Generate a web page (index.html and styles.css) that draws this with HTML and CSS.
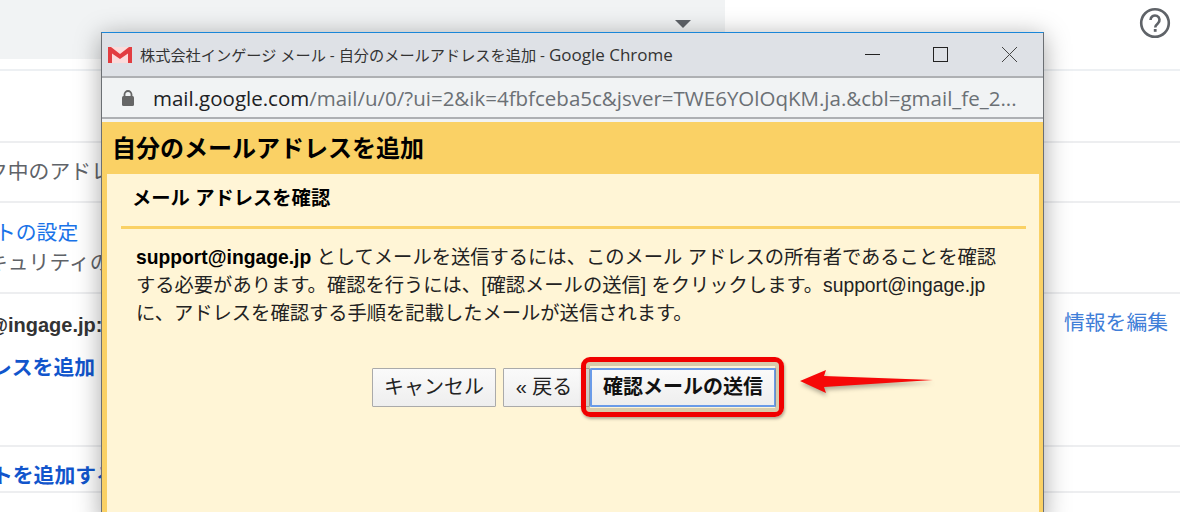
FILE: index.html
```html
<!DOCTYPE html>
<html lang="ja">
<head>
    <meta charset="UTF-8">
    <title>自分のメールアドレスを追加</title>
    <link rel="stylesheet" href="styles.css">
</head>
<body>
    <div class="settings">
        <div class="top-row">
            <div class="top-panel"><span class="caret"></span></div>
            <svg class="help" width="32" height="32" viewBox="0 0 32 32">
                <circle cx="16" cy="16" r="13.8" fill="none" stroke="#5f6368" stroke-width="2.6"/>
                <path d="M11.5 13a4.5 4.5 0 1 1 7.3 3.5c-1.6 1.3-2.6 2-2.6 4" fill="none" stroke="#5f6368" stroke-width="2.6"/>
                <rect x="14.8" y="22" width="2.8" height="2.8" fill="#5f6368"/>
            </svg>
        </div>
        <div class="row row-a"></div>
        <div class="row row-b"><span class="grey cut-b">ク中のアドレス</span></div>
        <div class="row row-c">
            <a class="link cut-c">トの設定</a>
            <span class="grey cut-d">キュリティの</span>
        </div>
        <div class="row row-d">
            <div class="row-d-left">
                <b class="mail cut-e">support@ingage.jp:</b>
                <a class="link strong cut-f">レスを追加</a>
            </div>
            <a class="link edit">情報を編集</a>
        </div>
        <div class="row row-e"><a class="link strong cut-g">トを追加する</a></div>
    </div>

    <div class="popup">
        <div class="titlebar">
            <svg class="gmail" width="24" height="16" viewBox="0 0 24 16">
                <rect width="24" height="16" fill="#fbdcdc"/>
                <path d="M0 0h3l9 7 9-7h3v16h-4V6.500l-8 5.500-8-5.500V16H0z" fill="#e23d41"/>
            </svg>
            <span class="window-title">株式会社インゲージ メール - 自分のメールアドレスを追加 - <span class="app-name">Google Chrome</span></span>
            <svg class="win-btns" width="160" height="20" viewBox="0 0 160 20">
                <path d="M0 9.500h15" stroke="#222" fill="none"/>
                <rect x="68.500" y="2.500" width="14" height="14" stroke="#222" fill="none"/>
                <path d="M137 2l15 15M152 2l-15 15" stroke="#444" fill="none"/>
            </svg>
        </div>
        <div class="urlbar">
            <svg class="lock" width="14" height="16" viewBox="0 0 14 16">
                <path d="M3.500 7V4.500a3.500 3.500 0 0 1 7 0V7" fill="none" stroke="#666" stroke-width="1.800"/>
                <rect x="1" y="6" width="12" height="10" rx="1.500" fill="#666"/>
            </svg>
            <span class="url"><span class="host">mail.google.com</span>/mail/u/0/?ui=2&amp;ik=4fbfceba5c&amp;jsver=TWE6YOlOqKM.ja.&amp;cbl=gmail_fe_2...</span>
        </div>
        <div class="dialog">
            <h1 class="dialog-title">自分のメールアドレスを追加</h1>
            <div class="dialog-body">
                <h2 class="section-title">メール アドレスを確認</h2>
                <p class="message"><b>support@ingage.jp</b> としてメールを送信するには、このメール アドレスの所有者であることを確認<br>する必要があります。確認を行うには、[確認メールの送信] をクリックします。support@ingage.jp<br>に、アドレスを確認する手順を記載したメールが送信されます。</p>
                <div class="buttons">
                    <button class="btn cancel">キャンセル</button>
                    <button class="btn back">« 戻る</button>
                    <button class="btn send">確認メールの送信</button>
                </div>
            </div>
        </div>
    </div>

    <div class="highlight"></div>
    <svg class="arrow" width="140" height="34" viewBox="0 0 140 34">
        <path d="M1 16L27 5l-2 6 109 4-109 7 2 6z" fill="#f60808"/>
    </svg>
</body>
</html>
```

FILE: styles.css
```css
* {
    box-sizing: border-box;
    margin: 0;
    padding: 0;
}

html, body {
    height: 512px;
    overflow: hidden;
}

body {
    background: #fff;
    font-family: "Liberation Sans", "Noto Sans CJK JP", sans-serif;
    color: #202124;
}

.top-row {
    display: flex;
    justify-content: space-between;
    align-items: flex-start;
    height: 71px;
    padding-right: 9px;
    border-bottom: 2px solid #edf0f3;
}

.top-panel {
    display: flex;
    justify-content: flex-end;
    width: 725px;
    height: 59px;
    padding: 20px 34px 0 0;
    background: #f1f3f4;
}

.caret {
    width: 0;
    height: 0;
    border-left: 8px solid transparent;
    border-right: 8px solid transparent;
    border-top: 8px solid #5f6368;
}

.help {
    margin-top: 7px;
}

.row {
    border-bottom: 2px solid #edeef0;
    font-size: 20.8px;
    line-height: 30px;
    overflow: hidden;
    white-space: nowrap;
}

.row-a {
    height: 72px;
}

.row-b {
    height: 60px;
    padding-top: 14px;
}

.row-c {
    display: flex;
    flex-direction: column;
    height: 91px;
    padding-top: 15px;
}

.row-d {
    display: flex;
    justify-content: space-between;
    height: 153px;
    padding: 17px 12px 0 0;
}

.row-d-left {
    display: flex;
    flex-direction: column;
    gap: 14px;
}

.row-e {
    padding-top: 14px;
}

.grey {
    color: #5f6368;
}

.link {
    color: #1a73e8;
}

.link.strong {
    color: #1155cc;
    font-weight: bold;
}

.mail {
    color: #333;
    font-size: 20px;
    line-height: 28px;
}

.edit {
    line-height: 24px;
    color: #3f7ed8;
}

.cut-b { margin-left: -13px; }
.cut-c { margin-left: -5px; }
.cut-d { margin-left: -13px; }
.cut-e { margin-left: -86px; }
.cut-f { margin-left: -9px; }
.cut-g { margin-left: -8px; }

.popup {
    position: absolute;
    left: 101px;
    top: 32px;
    width: 943px;
    height: 490px;
    display: flex;
    flex-direction: column;
    border: 1px solid #6b6f73;
    border-top-color: #1a86d8;
    box-shadow: 0 4px 24px rgba(0, 0, 0, 0.35);
}

.titlebar {
    display: flex;
    align-items: center;
    flex: none;
    height: 45px;
    padding-left: 6px;
    background: #dee1e6;
    border-bottom: 2px solid #aeb0b3;
}

.gmail {
    flex: none;
    margin-right: 8px;
}

.window-title {
    font-family: "Open Sans", "Noto Sans CJK JP", sans-serif;
    font-size: 15.2px;
    color: #333;
    white-space: nowrap;
}

.app-name {
    font-size: 17px;
}

.win-btns {
    margin-left: auto;
    margin-right: 18px;
    flex: none;
}

.urlbar {
    display: flex;
    align-items: center;
    flex: none;
    height: 44px;
    padding: 0 0 4px 19px;
    background: #f1f3f4;
    position: relative;
}

.urlbar::after {
    content: "";
    position: absolute;
    left: 0;
    right: 0;
    bottom: 3px;
    height: 2px;
    background: #aeb0b3;
}

.lock {
    flex: none;
    margin-right: 18px;
}

.url {
    font-family: "Open Sans", sans-serif;
    font-size: 20.5px;
    color: #6b7075;
    white-space: nowrap;
}

.host {
    color: #202124;
}

.dialog {
    flex: 1;
    display: flex;
    flex-direction: column;
    background: #fad165;
    padding: 0 4px 0 5px;
}

.dialog-title {
    height: 52px;
    padding: 8px 0 0 5px;
    font-family: "Noto Sans CJK JP", sans-serif;
    font-size: 24px;
    line-height: 34px;
    font-weight: bold;
    color: #000;
}

.dialog-body {
    flex: 1;
    background: #fff5d6;
    padding: 0 13px 0 14px;
}

.section-title {
    height: 55px;
    padding: 12px 0 0 11px;
    font-size: 19.3px;
    line-height: 26px;
    font-weight: bold;
    color: #000;
    border-bottom: 3px solid #fad165;
}

.message {
    padding: 15px 0 0 15px;
    font-size: 19.3px;
    line-height: 28px;
    color: #222;
    white-space: nowrap;
}

.message b {
    color: #000;
}

.buttons {
    display: flex;
    gap: 7px;
    margin: 40px 0 0 251px;
}

.btn {
    height: 39px;
    padding-bottom: 5px;
    border: 1px solid #aaa;
    border-radius: 1px;
    background: linear-gradient(#fafafa, #eeeeee);
    color: #222;
    font-family: "Liberation Sans", "Noto Sans CJK JP", sans-serif;
    font-size: 20px;
}

.cancel {
    width: 124px;
}

.back {
    width: 87px;
    padding-right: 5px;
}

.send {
    width: 186px;
    margin-left: -7px;
    border: 2px solid #6a9be8;
    font-weight: bold;
    color: #111;
}

.highlight {
    position: absolute;
    left: 581px;
    top: 357px;
    width: 203px;
    height: 60px;
    border: 5px solid #f00000;
    border-radius: 9px;
    box-shadow: 1px 2px 3px rgba(0, 0, 0, 0.3), inset 0 0 0 4px rgba(120, 110, 80, 0.3);
}

.arrow {
    position: absolute;
    left: 799px;
    top: 365px;
    filter: drop-shadow(1px 3px 2px rgba(0, 0, 0, 0.3));
}
```
